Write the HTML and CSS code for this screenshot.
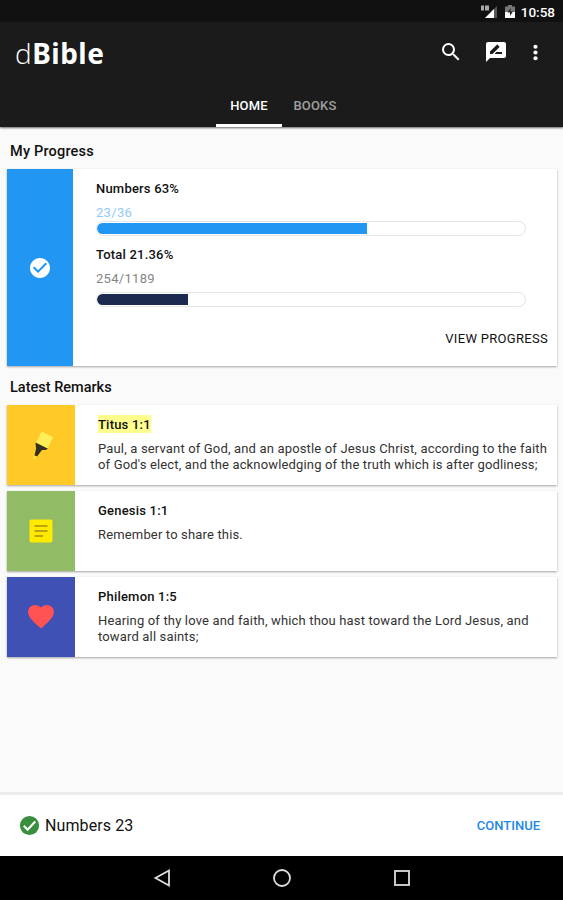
FILE: index.html
```html
<!DOCTYPE html>
<html lang="en">
<head>
    <meta charset="UTF-8">
    <meta name="viewport" content="width=device-width, initial-scale=1.0">
    <title>dBible</title>
    <link rel="stylesheet" href="styles.css">
</head>
<body>
	<header>
		<div class="status">
			<svg width="17" height="14" viewBox="0 0 17 14">
				<path d="M0 .5h3v5H0zM4 .5h4v5H4z" fill="#aaa"/>
				<path d="M16 1v12H4z" fill="#555"/>
				<path d="M13 4v9H4z" fill="#fff"/>
			</svg>
			<svg class="battery" width="10" height="14" viewBox="0 0 10 14">
				<path d="M3 0h4v1.500H10V13H0V1.500h3z" fill="#777"/>
				<path d="M0 7h10v6H0z" fill="#fff"/>
				<path d="M5.500 3L2.500 7.500H5V11l3-4.500H5.500z" fill="#222"/>
			</svg>
			<span class="clock">10:58</span>
		</div>
		<div class="toolbar">
			<h1><span>d</span>Bible</h1>
			<div class="actions">
				<svg width="24" height="24" viewBox="0 0 24 24" fill="#fff"><path d="M15.500 14h-.79l-.28-.27A6.470 6.470 0 0 0 16 9.500 6.500 6.500 0 1 0 9.500 16c1.610 0 3.090-.59 4.230-1.570l.27.28v.79l5 4.990L20.490 19l-4.990-5zm-6 0C7.010 14 5 11.990 5 9.500S7.010 5 9.500 5 14 7.010 14 9.500 11.990 14 9.500 14z"/></svg>
				<svg width="24" height="24" viewBox="0 0 24 24" fill="#fff"><path d="M20 2H4c-1.100 0-1.990.9-1.990 2L2 22l4-4h14c1.100 0 2-.9 2-2V4c0-1.100-.9-2-2-2zM6 14v-2.470l6.880-6.880c.2-.2.510-.2.710 0l1.770 1.770c.2.200.2.510 0 .71L8.470 14H6zm12 0h-7.500l2-2H18v2z"/></svg>
				<svg width="23" height="23" viewBox="0 0 24 24" fill="#fff"><circle cx="12" cy="6" r="2.200"/><circle cx="12" cy="12" r="2.200"/><circle cx="12" cy="18" r="2.200"/></svg>
			</div>
		</div>
		<nav class="tabs">
			<a class="tab active">HOME</a>
			<a class="tab">BOOKS</a>
		</nav>
	</header>

	<main>
		<h2>My Progress</h2>
		<section class="card progress">
			<div class="side blue">
				<svg width="24" height="24" viewBox="0 0 24 24" fill="#fff"><path d="M12 2C6.480 2 2 6.480 2 12s4.480 10 10 10 10-4.480 10-10S17.520 2 12 2zm-2 15l-5-5 1.410-1.410L10 14.170l7.590-7.590L19 8l-9 9z"/></svg>
			</div>
			<div class="info">
				<h3>Numbers 63%</h3>
				<p class="count light">23/36</p>
				<div class="bar"><div class="fill" style="width: 63%"></div></div>
				<h3 class="total">Total 21.36%</h3>
				<p class="count">254/1189</p>
				<div class="bar second"><div class="fill navy" style="width: 21.36%"></div></div>
				<a class="view">VIEW PROGRESS</a>
			</div>
		</section>

		<h2 class="latest">Latest Remarks</h2>
		<section class="card remark">
			<div class="side amber">
				<svg width="26" height="30" viewBox="0 0 26 30">
					<path d="M13.500 1.500L25 7l-5.500 11.500L8 12.700z" fill="#ffee58"/>
					<path d="M7.500 12.500l12.500 6.300-2.500 1.200h-3.500l-5 6.500-2.500-1 1.500-6.500z" fill="#33301c"/>
					<path d="M6.500 25.500l2.200 1-3.200 3z" fill="#ffee58"/>
				</svg>
			</div>
			<div class="text">
				<h3><mark>Titus 1:1</mark></h3>
				<p>Paul, a servant of God, and an apostle of Jesus Christ, according to the faith<br>of God's elect, and the acknowledging of the truth which is after godliness;</p>
			</div>
		</section>
		<section class="card remark">
			<div class="side green">
				<svg width="24" height="24" viewBox="0 0 24 24">
					<rect x="0.500" y="0.500" width="23" height="23" rx="2" fill="#ffea00"/>
					<path d="M5.500 7h13M5.500 12h13M5.500 17h8.500" stroke="#a58f10" stroke-width="1.700"/>
				</svg>
			</div>
			<div class="text">
				<h3>Genesis 1:1</h3>
				<p>Remember to share this.</p>
			</div>
		</section>
		<section class="card remark">
			<div class="side indigo">
				<svg width="32" height="31" viewBox="0 0 24 24" fill="#ff5252"><path d="M12 21.350l-1.450-1.320C5.400 15.360 2 12.280 2 8.500 2 5.420 4.420 3 7.500 3c1.740 0 3.410.81 4.500 2.090C13.090 3.810 14.760 3 16.500 3 19.580 3 22 5.420 22 8.500c0 3.780-3.400 6.860-8.550 11.540L12 21.350z"/></svg>
			</div>
			<div class="text">
				<h3>Philemon 1:5</h3>
				<p>Hearing of thy love and faith, which thou hast toward the Lord Jesus, and<br>toward all saints;</p>
			</div>
		</section>
	</main>

	<footer>
		<svg width="23" height="23" viewBox="0 0 24 24"><circle cx="12" cy="12" r="10" fill="#388e3c"/><path d="M6 12.300l4 4 8-8.500" fill="none" stroke="#fff" stroke-width="2.200"/></svg>
		<span class="chapter">Numbers 23</span>
		<a class="continue">CONTINUE</a>
	</footer>

	<div class="navbar">
		<svg width="20" height="20" viewBox="0 0 20 20"><path d="M17 2.500v15L3.500 10z"/></svg>
		<svg width="20" height="20" viewBox="0 0 20 20"><circle cx="10" cy="10" r="8"/></svg>
		<svg width="20" height="20" viewBox="0 0 20 20"><rect x="3" y="3" width="14" height="14"/></svg>
	</div>
</body>
</html>
```
FILE: styles.css
```css
* {
	box-sizing: border-box;
	margin: 0;
	padding: 0;
}
body {
	display: flex;
	flex-direction: column;
	width: 563px;
	height: 900px;
	background-color: #fafafa;
	font-family: Roboto, sans-serif;
	font-size: 13px;
	color: #111;
	overflow: hidden;
}
svg {
	display: block;
	flex: none;
}
header {
	height: 127px;
	background-color: #1b1b1b;
	box-shadow: 0 1px 2px rgba(0, 0, 0, 0.6);
}
.status {
	display: flex;
	align-items: center;
	justify-content: flex-end;
	height: 22px;
	padding: 2px 8px 0 0;
	background-color: #111;
	color: #fff;
}
.battery {
	margin: 0 6px 0 7px;
}
.clock {
	font-size: 13.5px;
	font-weight: 500;
}
.toolbar {
	display: flex;
	align-items: center;
	justify-content: space-between;
	height: 62px;
	padding: 0 16px 0 15px;
}
h1 {
	font-family: "Noto Sans", sans-serif;
	font-size: 28px;
	font-weight: 700;
	line-height: 34px;
	letter-spacing: 0.5px;
	color: #fff;
}
h1 span {
	font-family: "Open Sans", sans-serif;
	font-weight: 300;
}
.actions {
	display: flex;
	align-items: center;
	gap: 21px;
	padding-bottom: 2px;
}
.actions svg:last-child {
	margin-left: -5px;
}
.tabs {
	display: flex;
	justify-content: center;
	height: 43px;
	padding-left: 1px;
}
.tab {
	width: 66px;
	border-bottom: 3px solid transparent;
	font-weight: 500;
	line-height: 43px;
	letter-spacing: 0.2px;
	text-align: center;
	color: #a0a0a0;
}
.tab.active {
	border-color: #fff;
	color: #fff;
}
main {
	flex: 1;
	padding: 16px 6px 0 7px;
}
h2 {
	padding-left: 3px;
	font-size: 14.5px;
	font-weight: 500;
	line-height: 18px;
	letter-spacing: 0.2px;
}
h2.latest {
	margin: 13px 0 8px;
	letter-spacing: 0;
}
.card {
	display: flex;
	background-color: #fff;
	box-shadow: 0 1px 2px rgba(0, 0, 0, 0.35);
}
.progress {
	height: 197px;
	margin-top: 8px;
}
.side {
	display: flex;
	align-items: center;
	justify-content: center;
	width: 68px;
}
.blue {
	width: 66px;
	background-color: #2196f3;
}
.amber {
	background-color: #ffca28;
}
.green {
	background-color: #92bb66;
}
.indigo {
	padding-bottom: 2px;
	background-color: #3f51b5;
}
h3 {
	font-size: 13px;
	font-weight: 500;
	line-height: 16px;
	letter-spacing: 0.2px;
}
.info {
	display: flex;
	flex: 1;
	flex-direction: column;
	padding: 12px 9px 0 23px;
}
.count {
	margin-top: 8px;
	line-height: 16px;
	letter-spacing: 0.3px;
	color: #858585;
}
.count.light {
	color: #90caf9;
}
.bar {
	width: 430px;
	height: 15px;
	padding: 1px 0;
	border: 1px solid #e4e4e4;
	border-radius: 8px;
	overflow: hidden;
}
.bar.second {
	margin-top: 5px;
}
.fill {
	height: 11px;
	border-radius: 6px 0 0 6px;
	background-color: #2196f3;
}
.fill.navy {
	background-color: #1b2a4e;
}
.total {
	margin-top: 11px;
}
.view {
	align-self: flex-end;
	margin-top: 24px;
	line-height: 16px;
	letter-spacing: 0.3px;
}
.remark {
	height: 80px;
	margin-bottom: 6px;
}
.text {
	flex: 1;
	padding: 12px 0 0 23px;
	white-space: nowrap;
}
.text p {
	margin-top: 8px;
	font-size: 13px;
	line-height: 15.5px;
	letter-spacing: 0.16px;
	color: #333;
}
mark {
	padding: 2px 0 1px;
	background-color: #ffff8d;
	color: inherit;
}
footer {
	display: flex;
	align-items: center;
	height: 64px;
	padding: 0 23px 1px 18px;
	border-top: 3px solid #ececec;
	background-color: #fff;
}
.chapter {
	flex: 1;
	margin-left: 4px;
	font-size: 16px;
	letter-spacing: 0.1px;
}
.continue {
	font-weight: 500;
	color: #1e88e5;
}
.navbar {
	display: flex;
	align-items: center;
	justify-content: center;
	gap: 100px;
	height: 44px;
	background-color: #000;
}
.navbar svg {
	fill: none;
	stroke: #ddd;
	stroke-width: 1.800;
}
```
